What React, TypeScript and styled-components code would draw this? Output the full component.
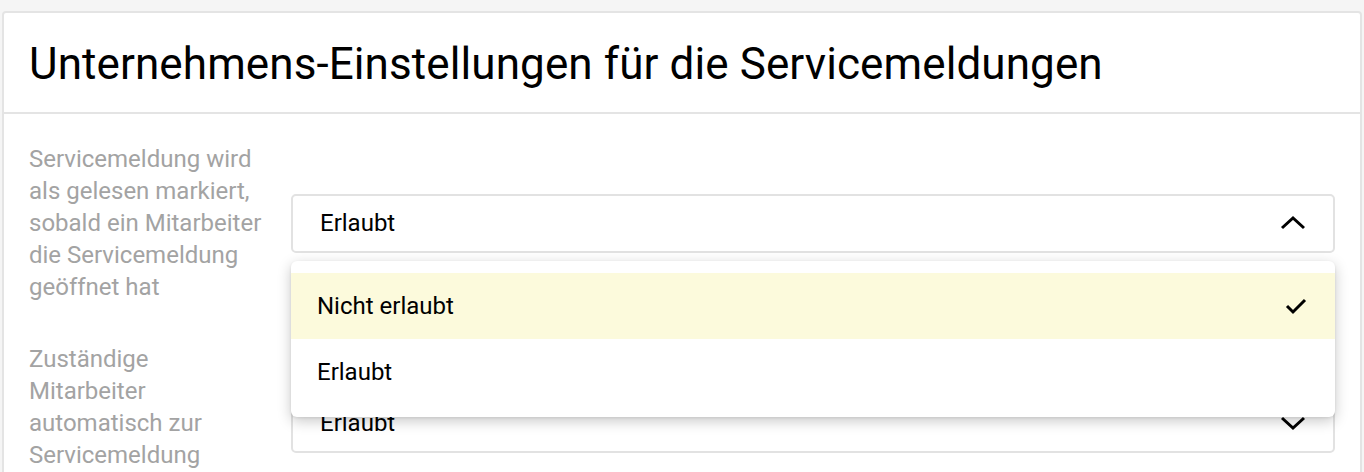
import React from "react";
import styled, { createGlobalStyle } from "styled-components";

const Global = createGlobalStyle`
  html, body { margin: 0; padding: 0; background: #f5f5f5; overflow: hidden; }
  body { font-family: Roboto, "Noto Sans", Arial, sans-serif; }
  * { box-sizing: border-box; }
`;

const Page = styled.div`
  padding: 11px 2px 0 2px;
  height: 472px;
  overflow: hidden;
`;

const Card = styled.div`
  background: #fff;
  border: 2px solid #e4e4e4;
  border-radius: 4px;
  height: 480px;
`;

const Header = styled.div`
  height: 101px;
  border-bottom: 2px solid #e4e4e4;
  display: flex;
  align-items: center;
  padding: 3px 25px 0 25px;
`;

const Title = styled.h1`
  margin: 0;
  font-size: 44px;
  font-weight: 400;
  color: #000;
  letter-spacing: 0.1px;
`;

const Body = styled.div`
  padding: 29px 25px 0 25px;
  display: flex;
  flex-direction: column;
  gap: 40px;
`;

const Row = styled.div`
  display: flex;
  align-items: center;
  gap: 20px;
`;

const Label = styled.div`
  width: 242px;
  flex: none;
  font-size: 24px;
  line-height: 32px;
  color: #a3a3a3;
`;

const SelectWrap = styled.div`
  position: relative;
  flex: 1;
`;

const SelectBox = styled.div`
  height: 59px;
  border: 2px solid #e2e2e2;
  border-radius: 5px;
  background: #fff;
  display: flex;
  align-items: center;
  justify-content: space-between;
  padding: 0 27px 0 27px;
  font-size: 24px;
  color: #000;
`;

const Menu = styled.div`
  position: absolute;
  left: 0;
  right: 0;
  top: 67px;
  background: #fff;
  border-radius: 6px;
  padding: 12px 0;
  box-shadow: 0 4px 14px rgba(0, 0, 0, 0.22), 0 1px 3px rgba(0, 0, 0, 0.08);
  z-index: 2;
`;

const Item = styled.div<{ $active?: boolean }>`
  height: 66px;
  display: flex;
  align-items: center;
  justify-content: space-between;
  padding: 0 28px 0 26px;
  font-size: 24px;
  color: #000;
  background: ${(p) => (p.$active ? "#fcfadc" : "#fff")};
`;

const Chevron = ({ up }: { up?: boolean }) => (
  <svg width="26" height="16" viewBox="0 0 26 16" fill="none">
    <polyline
      points={up ? "2,13 13,3 24,13" : "2,3 13,13 24,3"}
      stroke="#000"
      strokeWidth="3"
    />
  </svg>
);

const Check = () => (
  <svg width="22" height="18" viewBox="0 0 22 18" fill="none">
    <polyline points="2,9 8,15 20,3" stroke="#000" strokeWidth="3" />
  </svg>
);

export default function App() {
  return (
    <>
      <Global />
      <Page>
        <Card>
          <Header>
            <Title>Unternehmens-Einstellungen für die Servicemeldungen</Title>
          </Header>
          <Body>
            <Row>
              <Label>
                Servicemeldung wird als gelesen markiert, sobald ein Mitarbeiter die
                Servicemeldung geöffnet hat
              </Label>
              <SelectWrap>
                <SelectBox>
                  <span>Erlaubt</span>
                  <Chevron up />
                </SelectBox>
                <Menu>
                  <Item $active>
                    <span>Nicht erlaubt</span>
                    <Check />
                  </Item>
                  <Item>
                    <span>Erlaubt</span>
                  </Item>
                </Menu>
              </SelectWrap>
            </Row>
            <Row>
              <Label>
                Zuständige Mitarbeiter automatisch zur Servicemeldung hinzufügen
              </Label>
              <SelectWrap>
                <SelectBox>
                  <span>Erlaubt</span>
                  <Chevron />
                </SelectBox>
              </SelectWrap>
            </Row>
          </Body>
        </Card>
      </Page>
    </>
  );
}
